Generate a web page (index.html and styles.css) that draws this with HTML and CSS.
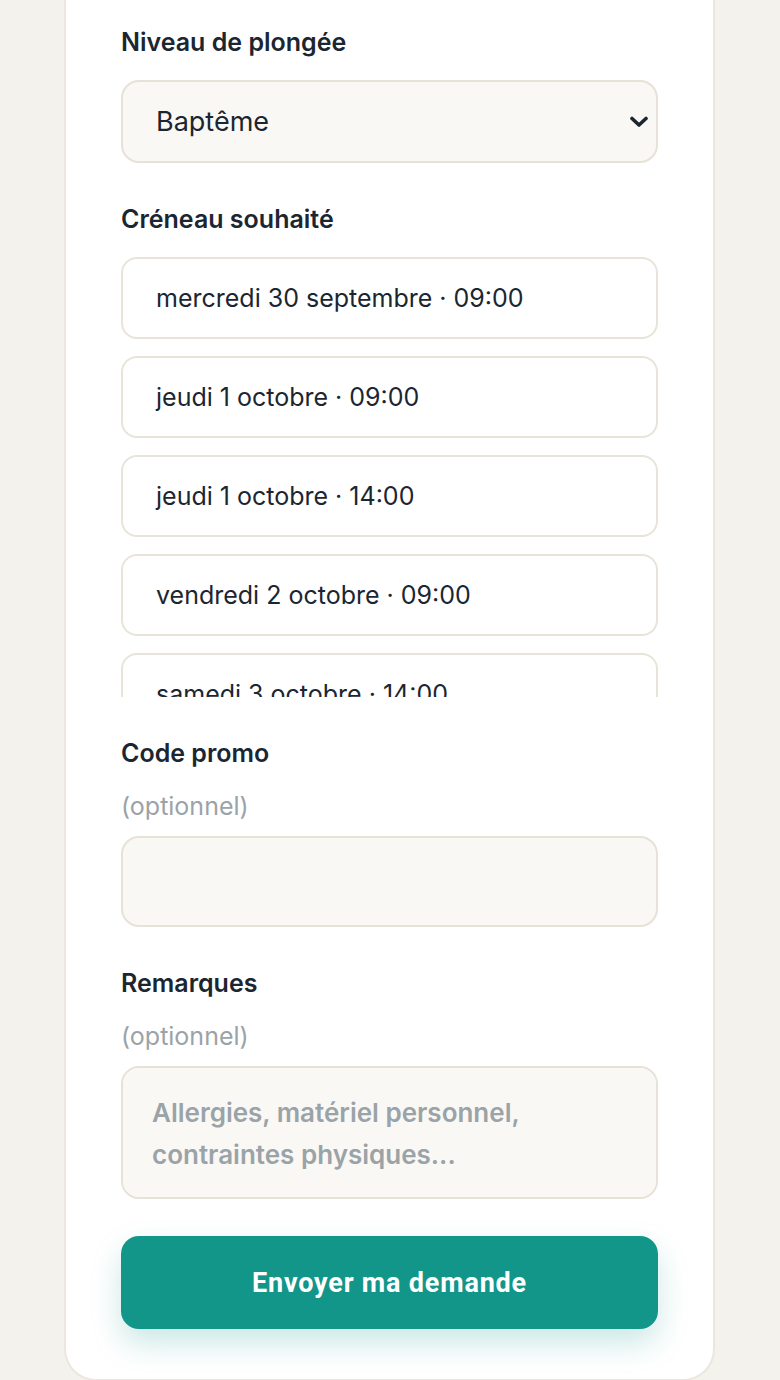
FILE: index.html
```
<!DOCTYPE html>
<html lang="fr">
<head>
<meta charset="utf-8">
<title>Réservation plongée</title>
<link rel="stylesheet" href="styles.css">
</head>
<body>
<main class="card">
  <form class="form">
    <div class="field">
      <label class="field-label" for="level">Niveau de plongée</label>
      <div class="select-wrap">
        <select id="level" class="select">
          <option>Baptême</option>
          <option>Niveau 1</option>
          <option>Niveau 2</option>
        </select>
        <svg class="chevron" width="20" height="12" viewBox="0 0 20 12" aria-hidden="true"><path d="M3 2.5 L10 9 L17 2.5" fill="none" stroke="#1b2631" stroke-width="3.6" stroke-linecap="round" stroke-linejoin="round"/></svg>
      </div>
    </div>

    <div class="field">
      <span class="field-label">Créneau souhaité</span>
      <div class="slots">
        <button type="button" class="slot">mercredi 30 septembre · 09:00</button>
        <button type="button" class="slot">jeudi 1 octobre · 09:00</button>
        <button type="button" class="slot">jeudi 1 octobre · 14:00</button>
        <button type="button" class="slot">vendredi 2 octobre · 09:00</button>
        <button type="button" class="slot">samedi 3 octobre · 14:00</button>
        <button type="button" class="slot">samedi 3 octobre · 16:00</button>
      </div>
    </div>

    <div class="field">
      <label class="field-label field-label--opt" for="promo">Code promo<span class="optional">(optionnel)</span></label>
      <input id="promo" class="input" type="text">
    </div>

    <div class="field">
      <label class="field-label field-label--opt" for="notes">Remarques<span class="optional">(optionnel)</span></label>
      <textarea id="notes" class="textarea" placeholder="Allergies, matériel personnel, contraintes physiques..."></textarea>
    </div>

    <button type="submit" class="submit">Envoyer ma demande</button>
  </form>
</main>
</body>
</html>
```

FILE: styles.css
```
* {
  box-sizing: border-box;
}

body {
  margin: 0;
  background: #f4f2ed;
  font-family: "Inter", "Liberation Sans", sans-serif;
  color: #1b2631;
}

.card {
  width: 651px;
  margin-left: 64px;
  background: #ffffff;
  border: 2px solid #ebe7df;
  border-top: none;
  border-radius: 0 0 32px 32px;
  padding: 26px 55px 50px;
}

.form {
  display: flex;
  flex-direction: column;
  gap: 40px;
}

.field {
  display: flex;
  flex-direction: column;
}

.field-label {
  display: block;
  font-size: 25px;
  line-height: 32px;
  font-weight: 600;
  color: #1b2631;
  margin-bottom: 22px;
}

.field-label--opt {
  margin-bottom: 14px;
}

.optional {
  display: block;
  margin-top: 21px;
  font-weight: 400;
  color: #9aa3a8;
}

.select-wrap {
  position: relative;
}

.select {
  width: 100%;
  height: 83px;
  appearance: none;
  -webkit-appearance: none;
  background: #faf8f4;
  border: 2px solid #e7e2d8;
  border-radius: 18px;
  padding: 0 60px 0 33px;
  font-family: inherit;
  font-size: 27px;
  color: #1b2631;
}

.chevron {
  position: absolute;
  right: 9px;
  top: 36px;
  pointer-events: none;
}

.slots {
  display: flex;
  flex-direction: column;
  gap: 17px;
  height: 440px;
  overflow-y: auto;
  scrollbar-width: none;
}

.slot {
  flex: 0 0 82px;
  width: 100%;
  background: #ffffff;
  border: 2px solid #e8e4da;
  border-radius: 16px;
  padding: 0 33px;
  text-align: left;
  font-family: "Inter", "Liberation Sans", sans-serif;
  font-size: 25px;
  color: #1b2631;
}

.input {
  height: 91px;
  width: 100%;
  background: #faf8f4;
  border: 2px solid #e7e2d8;
  border-radius: 18px;
  padding: 0 29px;
  font-family: inherit;
  font-size: 25px;
}

.textarea {
  display: block;
  width: 100%;
  height: 133px;
  background: #faf8f4;
  border: 2px solid #e7e2d8;
  border-radius: 18px;
  padding: 24px 29px;
  font-family: inherit;
  font-size: 26px;
  font-weight: 600;
  line-height: 42px;
  resize: none;
}

.textarea::placeholder {
  color: #9aa3a8;
  font-weight: 600;
}

.submit {
  margin-top: -3px;
  height: 93px;
  width: 100%;
  border: none;
  border-radius: 18px;
  background: #13968a;
  color: #ffffff;
  font-family: "Roboto", "Liberation Sans", sans-serif;
  font-size: 27px;
  font-weight: 700;
  letter-spacing: 0.8px;
  box-shadow: 0 14px 30px rgba(19, 150, 138, 0.22);
}
```
